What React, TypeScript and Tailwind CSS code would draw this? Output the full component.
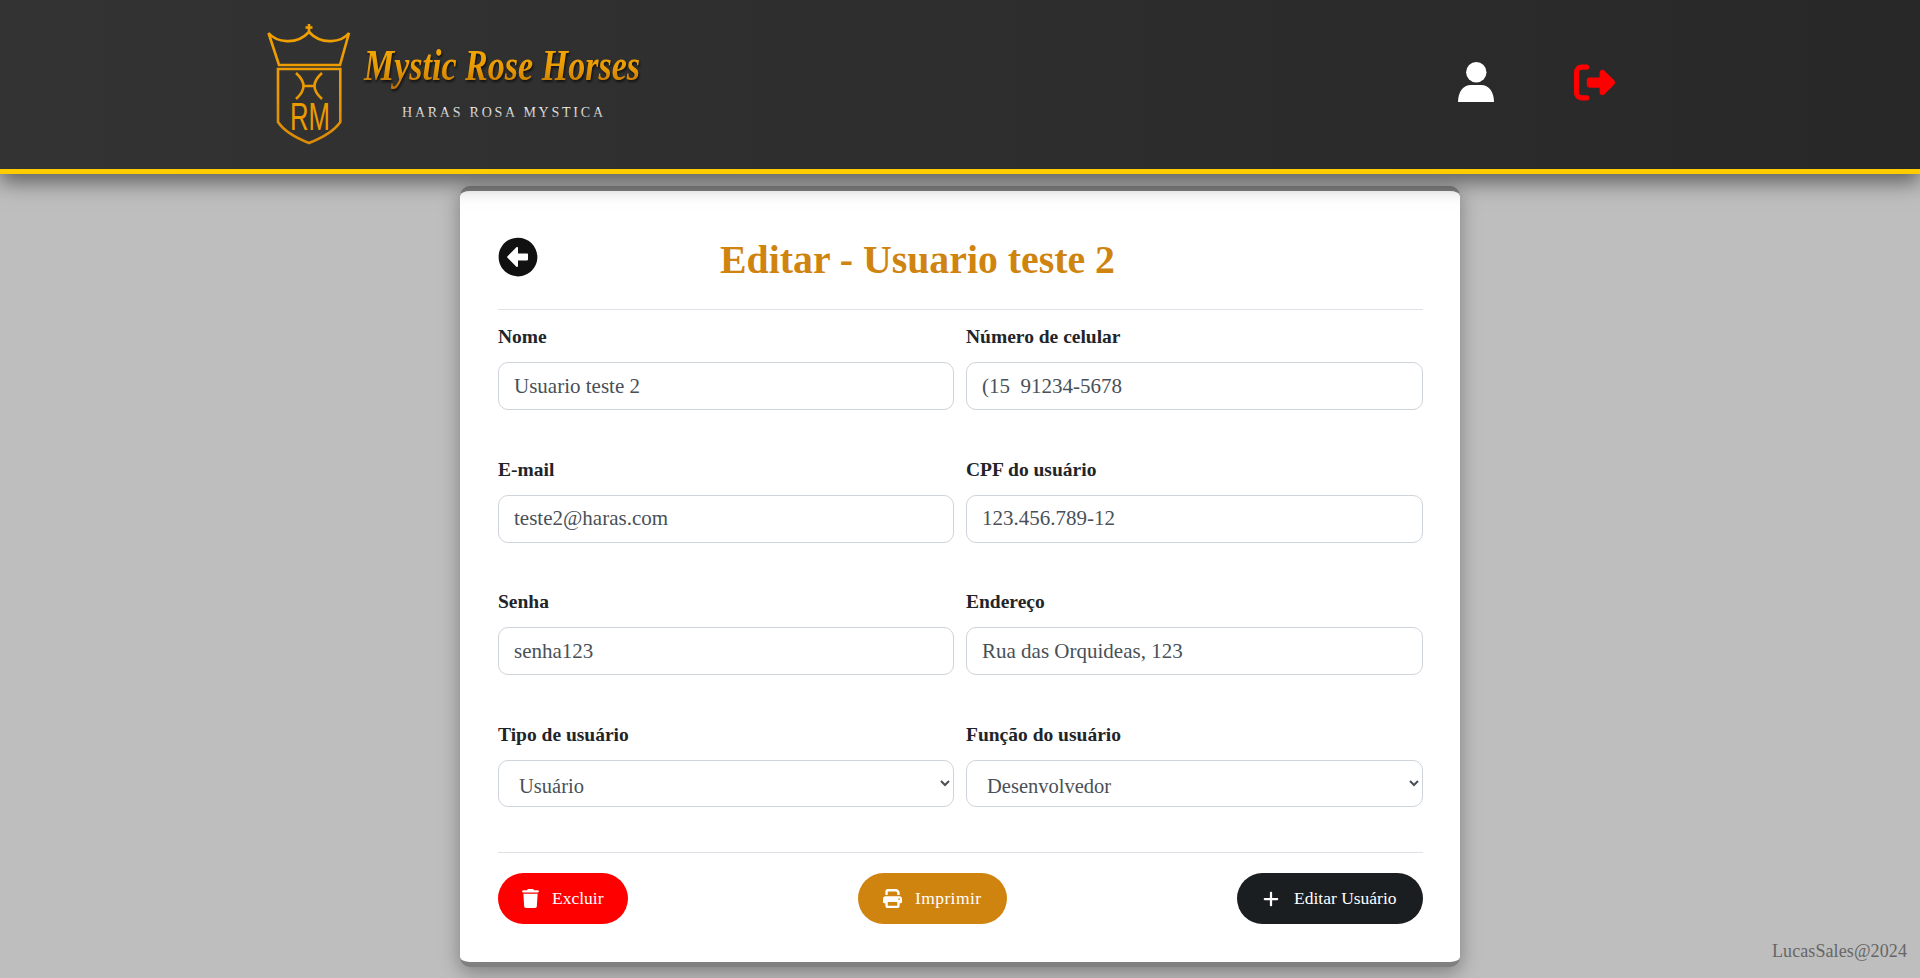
import React from "react";
import { FaArrowAltCircleLeft } from "react-icons/fa";
import { FaRightFromBracket, FaTrash, FaPrint, FaPlus } from "react-icons/fa6";

const Logo = () => (
  <svg width="520" height="169" viewBox="0 0 520 169" className="shrink-0">
    <defs>
      <linearGradient id="gold" x1="0" y1="0" x2="0" y2="1">
        <stop offset="0" stopColor="#f7ab00" />
        <stop offset="0.55" stopColor="#e89a05" />
        <stop offset="1" stopColor="#b96f00" />
      </linearGradient>
      <linearGradient id="goldline" gradientUnits="userSpaceOnUse" x1="0" y1="24" x2="0" y2="143">
        <stop offset="0" stopColor="#f2a000" />
        <stop offset="0.5" stopColor="#eb9a00" />
        <stop offset="1" stopColor="#d88a08" />
      </linearGradient>
      <linearGradient id="silver" x1="0" y1="0" x2="0" y2="1">
        <stop offset="0" stopColor="#ffffff" />
        <stop offset="1" stopColor="#a8a8a8" />
      </linearGradient>
    </defs>
    <g fill="none" stroke="url(#goldline)" strokeWidth="2.6">
      <path d="M28.5 33 C36 42 56 46 69 32 C82 46 102 42 109 33 L100 65 H39 Z" />
      <path d="M69 24 V33 M65.5 27.5 H72.5" />
      <path d="M38 69 H100.3 V122 Q92 134 69 143 Q46 134 38 122 Z" />
      <path d="M56 73 C66 82 66 90 56 99 M82 73 C72 82 72 90 82 99 M63 86 H75" />
    </g>
    <text x="50" y="130" fontFamily="'Liberation Sans', sans-serif" fontSize="39" fill="#eb9a00" textLength="40" lengthAdjust="spacingAndGlyphs">RM</text>
    <text x="124" y="80" fontFamily="'Liberation Serif', serif" fontStyle="italic" fontWeight="700" fontSize="44" fill="url(#gold)" textLength="276" lengthAdjust="spacingAndGlyphs" style={{ filter: "drop-shadow(1px 2px 1px #111)" }}>Mystic Rose Horses</text>
    <text x="162" y="117" fontFamily="'Liberation Serif', serif" fontSize="14" fill="url(#silver)" textLength="201" lengthAdjust="spacing">HARAS ROSA MYSTICA</text>
  </svg>
);

const UserIcon = () => (
  <svg width="36" height="40" viewBox="0 0 36 40" fill="#fff">
    <circle cx="18.3" cy="10.2" r="10.2" />
    <path d="M0 40 C0 30 5 23 13 23 H23 C31 23 36 30 36 40 Z" />
  </svg>
);

const field = "h-12 w-full rounded-[10px] border border-[#ced4da] bg-white px-[15px] text-[21px] text-[#495057] outline-none";
const labelCls = "mb-[13px] block h-[25px] text-[19.5px] leading-[25px] font-bold text-[#212529]";

const Text = ({ label, value }: { label: string; value: string }) => (
  <div className="min-w-0">
    <label className={labelCls}>{label}</label>
    <input className={field} defaultValue={value} readOnly />
  </div>
);

const Sel = ({ label, value }: { label: string; value: string }) => (
  <div className="min-w-0">
    <label className={labelCls}>{label}</label>
    <select className="h-[47px] w-full rounded-[10px] border border-[#ced4da] bg-white pl-[16px] pt-[4px] text-[20.5px] text-[#495057] outline-none" defaultValue={value}>
      <option>{value}</option>
    </select>
  </div>
);

const btn = "flex h-[51px] items-center rounded-full text-[17.5px] text-white";

export default function App() {
  return (
    <div className="relative min-h-[978px] overflow-hidden bg-[#bebebe] font-['Liberation_Serif',serif]">
      <header className="relative z-10 flex h-[174px] items-start border-b-[5px] border-[#ffcc00] bg-linear-to-r from-[#333333] to-[#282828] pl-[240px] pr-[305px] shadow-[0_8px_20px_rgba(0,0,0,0.5)]">
        <Logo />
        <div className="ml-auto flex items-start gap-[80px] pt-[62px]">
          <UserIcon />
          <FaRightFromBracket className="h-[41px] w-[41px] text-[#ff0000]" />
        </div>
      </header>

      <main className="mx-auto mt-[12px] w-[1000px] rounded-[10px] border-y-[5px] border-[#808080] bg-white pb-[38px] pl-[38px] pr-[37px] pt-[46px] shadow-[0_5px_20px_rgba(0,0,0,0.35)]">
        <div className="flex h-[73px] items-start border-b border-[#dee2e6]">
          <button className="h-10 w-10 rounded-full bg-white text-[#111]">
            <FaArrowAltCircleLeft className="h-10 w-10" />
          </button>
          <h1 className="ml-[182px] text-[39.8px] leading-[46px] font-bold text-[#d08410]">Editar - Usuario teste 2</h1>
        </div>

        <div className="mt-[14px] grid grid-cols-[456px_457px] gap-x-[12px] gap-y-[46.7px]">
          <Text label="Nome" value="Usuario teste 2" />
          <Text label="Número de celular" value="(15  91234-5678" />
          <Text label="E-mail" value="teste2@haras.com" />
          <Text label="CPF do usuário" value="123.456.789-12" />
          <Text label="Senha" value="senha123" />
          <Text label="Endereço" value="Rua das Orquideas, 123" />
          <Sel label="Tipo de usuário" value="Usuário" />
          <Sel label="Função do usuário" value="Desenvolvedor" />
        </div>

        <div className="mt-[45px] flex items-center justify-between border-t border-[#dee2e6] pt-[20px]">
          <button className={`${btn} w-[130px] bg-[#ff0000] pl-[23px]`}>
            <FaTrash className="mr-[12px] h-[19px] w-[19px]" />
            Excluir
          </button>
          <button className={`${btn} w-[149px] bg-[#d08410] pl-[25px] tracking-[0.4px]`}>
            <FaPrint className="mr-[13px] h-[19px] w-[19px]" />
            Imprimir
          </button>
          <button className={`${btn} w-[186px] bg-[#1b1e21] pl-[25px]`}>
            <FaPlus className="mr-[14px] h-[18px] w-[18px]" />
            Editar Usuário
          </button>
        </div>
      </main>

      <span className="absolute bottom-[13px] right-[13px] text-[18px] tracking-[0.1px] text-[#666666]">LucasSales@2024</span>
    </div>
  );
}
